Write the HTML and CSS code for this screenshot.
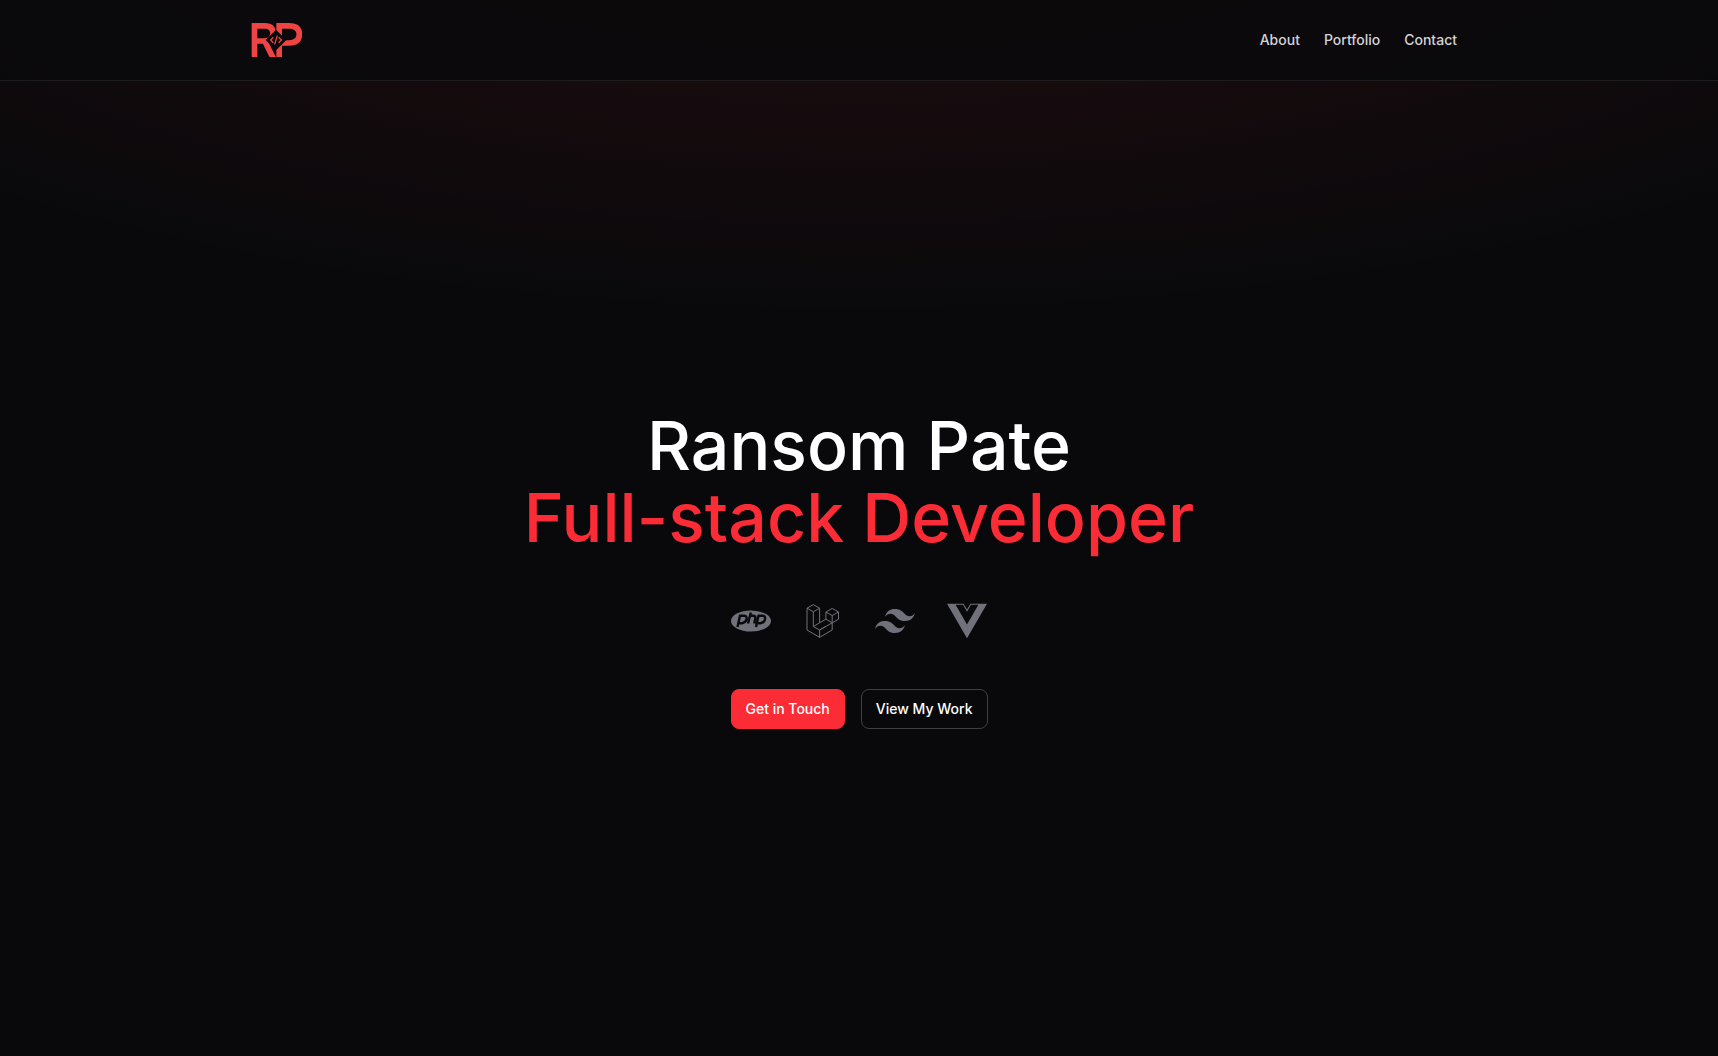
FILE: index.html
```
<!DOCTYPE html>
<html lang="en">
<head>
  <meta charset="UTF-8">
  <meta name="viewport" content="width=device-width, initial-scale=1">
  <title>Ransom Pate - Full-stack Developer</title>
  <link rel="stylesheet" href="styles.css">
</head>
<body>
  <header class="header">
    <div class="container">
      <a href="#" class="logo" aria-label="Home">
        <svg viewBox="0 0 152 102">
          <g fill="none" stroke="#ef4444" stroke-width="17">
            <path d="M8.5 102V8.500H40Q64 8.500 64 31T40 54H8M39 54L66 108"/>
            <path d="M82.500 102V8.500H112Q143 8.500 143 34T112 60H82"/>
          </g>
          <path fill="#09090b" d="M73 20L104 51L73 82L42 51Z"/>
          <path fill="none" stroke="#ef4444" stroke-width="4" d="M65 43L57 51L65 59M81 43L89 51L81 59M77 38L69 64"/>
        </svg>
      </a>
      <nav class="nav">
        <a href="#about">About</a>
        <a href="#portfolio">Portfolio</a>
        <a href="#contact">Contact</a>
      </nav>
    </div>
  </header>

  <main class="hero">
    <h1>Ransom Pate<br><span>Full-stack Developer</span></h1>

    <div class="stack">
      <!-- PHP -->
      <svg viewBox="0 0 40 40">
        <ellipse cx="20" cy="20" rx="20" ry="10.500" fill="currentColor"/>
        <path fill="none" stroke="#09090b" stroke-width="2.400" d="M6.500 26L9 14.800H13Q16.200 14.800 15.500 18.200T11 22.200H8M17 22.500L19.800 11.500M19 14.800H22Q25 14.800 24.300 17.500L23.200 22.500M25 26L27.500 14.800H31.500Q34.700 14.800 34 18.200T29.500 22.200H26.500"/>
      </svg>
      <!-- Laravel -->
      <svg viewBox="0 0 40 40" fill="none" stroke="currentColor" stroke-linejoin="round">
        <path d="M4 7.200L10.300 3.600L16.600 7.200L10.300 10.800ZM4 7.200V29L16.600 36.300V29L10.300 25.500V10.800M16.600 7.200V21.800L10.300 25.500M16.600 29L29.200 21.800V29L16.600 36.300M16.600 29L22.900 25.400M16.600 21.800L22.900 18.200L29.200 21.800L35.500 18.200V11L29.200 14.600L22.900 11L29.200 7.400L35.500 11M22.900 11V18.200M29.200 14.600V21.800"/>
      </svg>
      <!-- Tailwind -->
      <svg viewBox="0 0 24 24" fill="currentColor">
        <path d="M12.001 4.800c-3.200 0-5.200 1.600-6 4.800 1.200-1.600 2.600-2.200 4.200-1.800.913.228 1.565.89 2.288 1.624C13.666 10.618 15.027 12 18.001 12c3.200 0 5.200-1.600 6-4.800-1.200 1.600-2.600 2.200-4.200 1.800-.913-.228-1.565-.89-2.288-1.624C16.337 6.182 14.976 4.800 12.001 4.800zm-6 7.200c-3.200 0-5.200 1.600-6 4.800 1.200-1.600 2.600-2.200 4.200-1.800.913.228 1.565.89 2.288 1.624 1.177 1.194 2.538 2.576 5.512 2.576 3.200 0 5.200-1.600 6-4.800-1.200 1.600-2.600 2.200-4.200 1.800-.913-.228-1.565-.89-2.288-1.624C10.337 13.382 8.976 12 6.001 12z"/>
      </svg>
      <!-- Vue -->
      <svg viewBox="0 0 24 24" fill="currentColor">
        <path d="M24 1.610h-9.940L12 5.160 9.940 1.610H0l12 20.780ZM12 14.080 5.160 2.230h4.430L12 6.410l2.410-4.180h4.430Z"/>
      </svg>
    </div>

    <div class="actions">
      <a href="#contact" class="btn btn-primary">Get in Touch</a>
      <a href="#portfolio" class="btn btn-outline">View My Work</a>
    </div>
  </main>
</body>
</html>
```
FILE: styles.css
```
* { box-sizing: border-box; }
body {
  margin: 0;
  min-height: 100vh;
  display: flex;
  flex-direction: column;
  background: radial-gradient(ellipse 80% 50% at 50% -20%, rgba(251, 44, 54, 0.13), transparent) #09090b;
  color: #fff;
  font-family: Inter, "Liberation Sans", sans-serif;
  font-weight: 500;
}
a { color: inherit; text-decoration: none; }
svg { display: block; }

.header {
  background: rgba(9, 9, 11, 0.8);
  border-bottom: 1px solid rgba(255, 255, 255, 0.08);
}
.container {
  max-width: 1280px;
  height: 80px;
  margin: 0 auto;
  padding: 0 32px;
  display: flex;
  align-items: center;
  justify-content: space-between;
}
.logo svg { width: 52px; height: 34px; }
.nav { display: flex; gap: 4px; }
.nav a {
  padding: 8px 10px;
  font-size: 14px;
  line-height: 20px;
  color: #d4d4d8;
}
.nav a:hover { color: #fff; }

.hero {
  flex: 1;
  display: flex;
  flex-direction: column;
  align-items: center;
  justify-content: center;
  gap: 48px;
  padding: 0 32px;
}
h1 {
  margin: 0;
  font-size: 68px;
  line-height: 72px;
  font-weight: 500;
  text-align: center;
}
h1 span { color: #fb2c36; }

.stack { display: flex; gap: 32px; color: #71717b; }
.stack svg { width: 40px; height: 40px; }

.actions { display: flex; gap: 16px; }
.btn {
  height: 40px;
  padding: 0 14px;
  display: flex;
  align-items: center;
  border: 1px solid #3f3f46;
  border-radius: 8px;
  font-size: 14px;
}
.btn-primary { background: #fb2c36; border-color: #fb2c36; }
.btn-outline:hover { background: #18181b; }
```
